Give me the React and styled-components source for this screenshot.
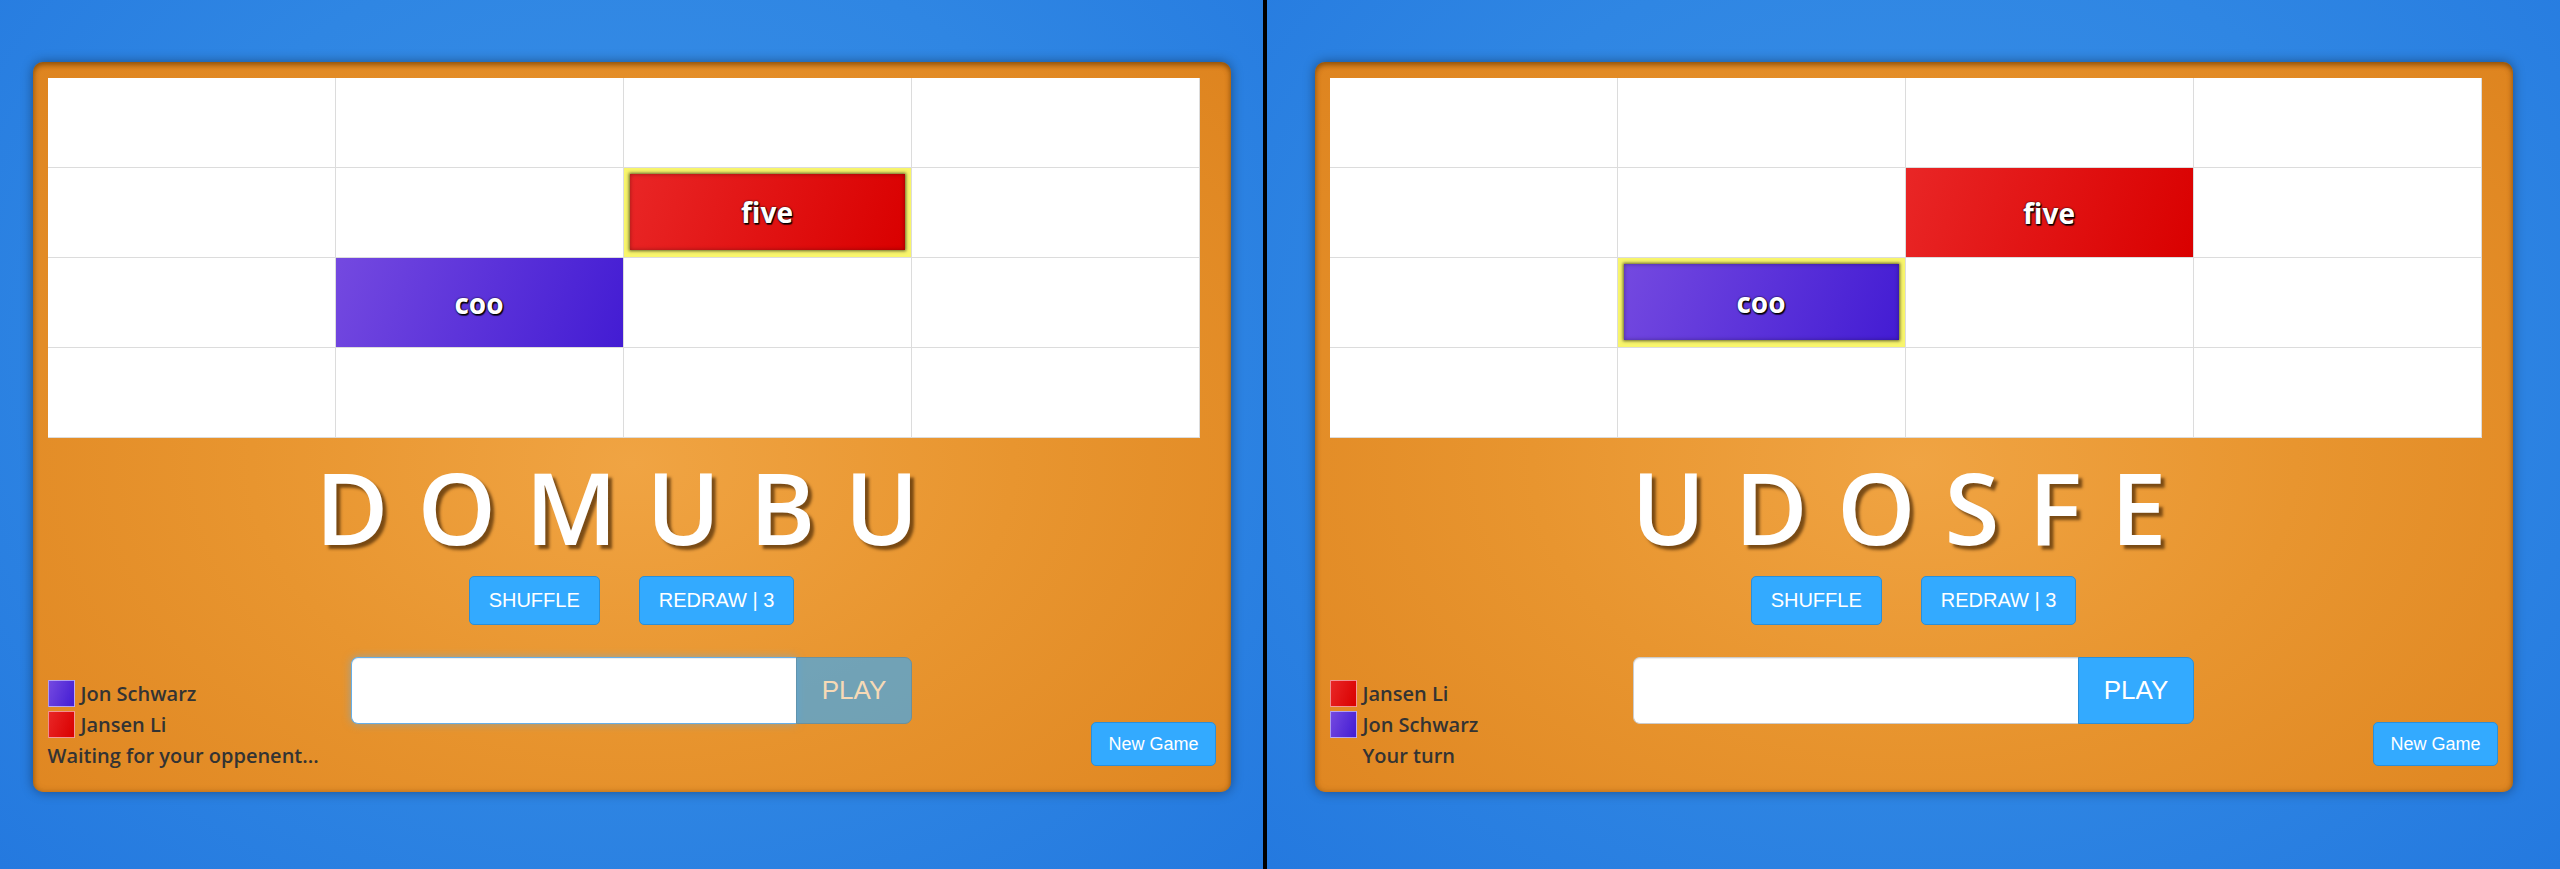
import React from "react";
import styled, { createGlobalStyle } from "styled-components";

const GlobalStyle = createGlobalStyle`
  html, body {
    margin: 0;
    padding: 0;
    height: 100%;
    overflow: hidden;
  }
  body {
    font-family: "Open Sans", "Liberation Sans", sans-serif;
  }
`;

const Screen = styled.div`
  display: flex;
  width: 2560px;
  height: 869px;
`;

const Pane = styled.div`
  flex: ${(p) => (p.$wide ? "1" : "0 0 1263px")};
  display: flex;
  justify-content: center;
  align-items: flex-start;
  padding-top: 62px;
  box-sizing: border-box;
  background: radial-gradient(ellipse at 50% 40%, #3b90e7 0%, #2f86e3 55%, #2479df 100%);
`;

const Divider = styled.div`
  flex: 0 0 4px;
  background: #000;
`;

const Card = styled.div`
  width: 1198px;
  height: 730px;
  box-sizing: border-box;
  padding: 16px 15px 23px;
  border-radius: 10px;
  display: flex;
  flex-direction: column;
  background: radial-gradient(ellipse at 50% 55%, #f0a443 0%, #e8952f 45%, #de841f 100%);
  box-shadow: 0 0 12px rgba(0, 0, 0, 0.4), inset 0 3px 5px rgba(110, 60, 0, 0.6),
    inset 0 0 6px rgba(110, 60, 0, 0.35);
`;

const Board = styled.div`
  display: grid;
  grid-template-columns: repeat(4, 288px);
  grid-auto-rows: 90px;
  width: 1152px;
  background: #fff;
`;

const Cell = styled.div`
  box-sizing: border-box;
  display: flex;
  border-right: 1px solid #dcdcdc;
  border-bottom: 1px solid #dcdcdc;
  padding: ${(p) => (p.$selected ? "6px 6px 7px" : "0")};
  background: ${(p) => (p.$selected ? "#f8f56c" : "#fff")};
`;

const tileColors = {
  red: "linear-gradient(110deg, #e92626 0%, #d90000 100%)",
  purple: "linear-gradient(110deg, #7449e0 0%, #431cd3 100%)",
};

const Tile = styled.div`
  flex: 1;
  display: flex;
  align-items: center;
  justify-content: center;
  background: ${(p) => tileColors[p.$color]};
  box-shadow: ${(p) =>
    p.$selected
      ? "0 0 3px 1px rgba(50, 50, 25, 0.75), inset 0 0 4px rgba(0, 0, 0, 0.35)"
      : "none"};
  color: #fff;
  font-family: "Open Sans", sans-serif;
  font-weight: 700;
  font-size: 28px;
  text-shadow: 0 0 2px #000, 1px 1px 1px #000, 1px 2px 1px rgba(0, 0, 0, 0.6);
`;

const Letters = styled.div`
  height: 136px;
  text-align: center;
  font-family: "Open Sans", sans-serif;
  font-weight: 600;
  font-size: 100px;
  line-height: 136px;
  letter-spacing: 29px;
  color: #fff;
  text-shadow: 4px 4px 3px rgba(60, 30, 0, 0.65);
`;

const ButtonRow = styled.div`
  display: flex;
  justify-content: center;
  gap: 39px;
  margin-top: 2px;
`;

const BlueButton = styled.button`
  height: ${(p) => p.$h || 49}px;
  padding: 0 ${(p) => p.$pad || 19}px;
  box-sizing: border-box;
  border: 1px solid #2b8fd8;
  border-radius: 5px;
  background: #33aaff;
  color: #fff;
  font-family: "Liberation Sans", Arial, sans-serif;
  font-size: ${(p) => p.$size || 20}px;
  cursor: pointer;
`;

const BottomRow = styled.div`
  display: grid;
  grid-template-columns: 1fr auto 1fr;
  align-items: end;
  margin-top: 32px;
  flex: 1;
`;

const Players = styled.div`
  display: flex;
  flex-direction: column;
  gap: 4px;
  color: #333;
  font-family: "Open Sans", sans-serif;
  font-weight: 600;
  font-size: 20px;
`;

const PlayerRow = styled.div`
  display: flex;
  align-items: center;
  height: 27px;
  white-space: nowrap;
`;

const Swatch = styled.span`
  width: 27px;
  height: 27px;
  box-sizing: border-box;
  border: 1px solid rgba(255, 255, 255, 0.55);
  background: ${(p) => tileColors[p.$color]};
  margin-right: 6px;
`;

const Status = styled.div`
  height: 27px;
  line-height: 27px;
  padding-left: ${(p) => (p.$indent ? 33 : 0)}px;
  white-space: nowrap;
`;

const PlayGroup = styled.div`
  display: flex;
  align-self: start;
`;

const WordInput = styled.input`
  width: 445px;
  height: 67px;
  box-sizing: border-box;
  border: 1px solid ${(p) => (p.$focused ? "#66afe9" : "#cccccc")};
  border-right: none;
  border-radius: 7px 0 0 7px;
  background: #fff;
  outline: none;
  box-shadow: ${(p) =>
    p.$focused
      ? "inset 0 1px 1px rgba(0,0,0,.075), 0 0 8px rgba(102,175,233,.6)"
      : "inset 0 1px 1px rgba(0,0,0,.075)"};
`;

const PlayButton = styled.button`
  width: 116px;
  height: 67px;
  border: 1px solid #2b8fd8;
  border-radius: 0 7px 7px 0;
  background: #33aaff;
  color: #fff;
  font-family: "Liberation Sans", Arial, sans-serif;
  font-size: 26px;
  opacity: ${(p) => (p.disabled ? 0.65 : 1)};
`;

const NewGameSlot = styled.div`
  display: flex;
  justify-content: flex-end;
  padding-bottom: 3px;
`;

const boards = {
  left: {
    letters: "DOMUBU",
    tiles: [
      { row: 1, col: 2, word: "five", color: "red", selected: true },
      { row: 2, col: 1, word: "coo", color: "purple" },
    ],
    players: [
      { name: "Jon Schwarz", color: "purple" },
      { name: "Jansen Li", color: "red" },
    ],
    status: "Waiting for your oppenent...",
    myTurn: false,
  },
  right: {
    letters: "UDOSFE",
    tiles: [
      { row: 1, col: 2, word: "five", color: "red" },
      { row: 2, col: 1, word: "coo", color: "purple", selected: true },
    ],
    players: [
      { name: "Jansen Li", color: "red" },
      { name: "Jon Schwarz", color: "purple" },
    ],
    status: "Your turn",
    myTurn: true,
  },
};

function GameCard({ game }) {
  const cells = [];
  for (let r = 0; r < 4; r++) {
    for (let c = 0; c < 4; c++) {
      const tile = game.tiles.find((t) => t.row === r && t.col === c);
      cells.push(
        <Cell key={`${r}-${c}`} $selected={tile?.selected}>
          {tile && (
            <Tile $color={tile.color} $selected={tile.selected}>
              {tile.word}
            </Tile>
          )}
        </Cell>
      );
    }
  }
  return (
    <Card>
      <Board>{cells}</Board>
      <Letters>{game.letters}</Letters>
      <ButtonRow>
        <BlueButton>SHUFFLE</BlueButton>
        <BlueButton>REDRAW | 3</BlueButton>
      </ButtonRow>
      <BottomRow>
        <Players>
          {game.players.map((p) => (
            <PlayerRow key={p.name}>
              <Swatch $color={p.color} />
              {p.name}
            </PlayerRow>
          ))}
          <Status $indent={game.myTurn}>{game.status}</Status>
        </Players>
        <PlayGroup>
          <WordInput $focused={!game.myTurn} />
          <PlayButton disabled={!game.myTurn}>PLAY</PlayButton>
        </PlayGroup>
        <NewGameSlot>
          <BlueButton $h={44} $pad={16} $size={18}>
            New Game
          </BlueButton>
        </NewGameSlot>
      </BottomRow>
    </Card>
  );
}

export default function App() {
  return (
    <>
      <GlobalStyle />
      <Screen>
        <Pane>
          <GameCard game={boards.left} />
        </Pane>
        <Divider />
        <Pane $wide>
          <GameCard game={boards.right} />
        </Pane>
      </Screen>
    </>
  );
}
